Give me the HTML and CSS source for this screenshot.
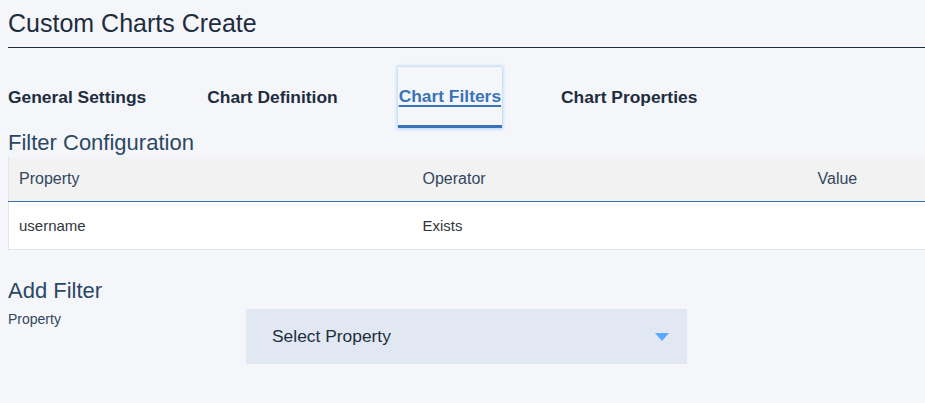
FILE: index.html
```html
<!DOCTYPE html>
<html lang="en">
<head>
<meta charset="utf-8">
<title>Custom Charts Create</title>
<link rel="stylesheet" href="styles.css">
</head>
<body>
<div class="page">
  <h1 class="page-title">Custom Charts Create</h1>
  <nav class="tabs">
    <a class="tab">General Settings</a>
    <a class="tab">Chart Definition</a>
    <a class="tab active">Chart Filters</a>
    <a class="tab">Chart Properties</a>
  </nav>
  <h2 class="section-title">Filter Configuration</h2>
  <div class="table-wrap">
    <table class="filters">
      <colgroup>
        <col class="col-property">
        <col class="col-operator">
        <col class="col-value">
      </colgroup>
      <thead>
        <tr><th>Property</th><th>Operator</th><th>Value</th></tr>
      </thead>
      <tbody>
        <tr><td>username</td><td>Exists</td><td></td></tr>
      </tbody>
    </table>
  </div>
  <h2 class="section-title add">Add Filter</h2>
  <div class="form-row">
    <label class="field-label">Property</label>
    <div class="select">
      <span class="select-text">Select Property</span>
      <svg class="caret" width="14" height="8" viewBox="0 0 14 8"><path d="M0 0H14L7 8Z" fill="#5aa8ff"/></svg>
    </div>
  </div>
</div>
</body>
</html>
```
FILE: styles.css
```css
html, body {
  margin: 0;
  padding: 0;
  background: #f5f6fa;
  font-family: "Liberation Sans", Arial, sans-serif;
  overflow: hidden;
}
.page {
  padding: 9px 0 0 8px;
}
.page-title {
  margin: 0;
  font-size: 25px;
  line-height: 29px;
  font-weight: normal;
  color: #1d2d3e;
  padding-bottom: 9px;
  border-bottom: 1px solid #1d2d3e;
}
.tabs {
  display: flex;
  gap: 61px;
  margin-top: 19px;
  height: 61px;
}
.tab {
  display: flex;
  align-items: center;
  font-size: 17.4px;
  font-weight: bold;
  color: #1d2d3e;
  height: 61px;
  box-sizing: border-box;
}
.tab.active {
  color: #3a72b8;
  text-decoration: underline;
  text-decoration-thickness: 2px;
  text-underline-offset: 3px;
  border-bottom: 3px solid #3a72b8;
  padding: 0 1px;
  box-shadow: 0 0 3px 1px rgba(120, 185, 255, 0.55);
  margin-left: -1px;
  margin-right: -2px;
}
.section-title {
  margin: 2px 0 2px;
  font-size: 22px;
  line-height: 25px;
  font-weight: normal;
  color: #2b4863;
}
.section-title.add {
  margin-top: 28px;
  margin-bottom: 6px;
}
.table-wrap {
  overflow: hidden;
}
.filters {
  width: 1209px;
  border-collapse: collapse;
  table-layout: fixed;
  border-left: 1px solid #e1e5ea;
}
.col-property { width: 403px; }
.col-operator { width: 395px; }
.col-value { width: 411px; }
.filters th {
  background: #f2f2f2;
  height: 44px;
  text-align: left;
  font-weight: normal;
  font-size: 16px;
  color: #32475e;
  padding: 0 11px;
  border-bottom: 1px solid #3b6fb0;
}
.filters td {
  background: #fff;
  height: 47px;
  font-size: 15px;
  color: #32363a;
  padding: 0 11px;
  border-bottom: 1px solid #e1e5ea;
}
.filters th:first-child,
.filters td:first-child {
  padding-left: 10px;
}
.form-row {
  display: grid;
  grid-template-columns: 238px 441px;
  align-items: start;
}
.field-label {
  font-size: 14px;
  color: #32475e;
  padding-top: 2px;
}
.select {
  height: 55px;
  background: #e1e8f2;
  display: flex;
  align-items: center;
  justify-content: space-between;
  padding: 0 18px 0 26px;
}
.select-text {
  font-size: 17.4px;
  color: #1d2d3e;
}
.caret {
  display: block;
}
```
